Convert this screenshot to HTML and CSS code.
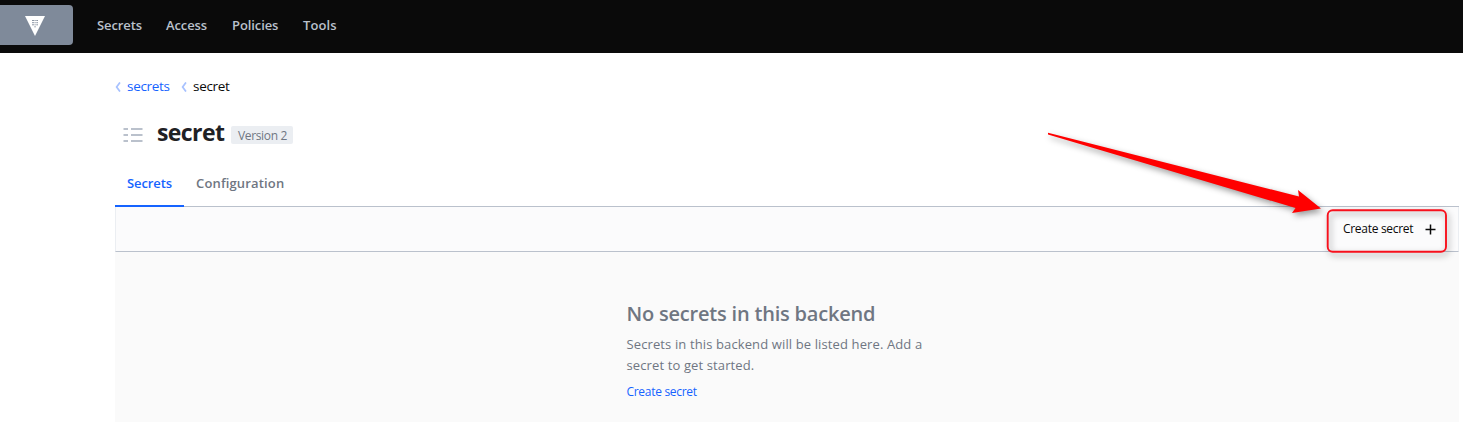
FILE: index.html
```html
<!DOCTYPE html>
<html lang="en">
<head>
<meta charset="utf-8">
<title>Vault</title>
<link rel="stylesheet" href="styles.css">
</head>
<body>
<header class="navbar">
  <a class="brand" aria-label="Vault"><svg width="20" height="20" viewBox="0 0 20 20"><path d="M0 0h20L10 20z" fill="#fff"/><path d="M7 4.5h2m.5 0h1.2m.6 0H13M7 6.7h2m.5 0h1.2m.6 0H13M7 8.8h2m.5 0h1.2m.6 0H13M9.3 10.8h1.5" stroke="#7f8a9a" stroke-width=".9" fill="none"/></svg></a>
  <nav class="nav">
    <a class="nav-secrets">Secrets</a><a class="nav-access">Access</a><a class="nav-policies">Policies</a><a class="nav-tools">Tools</a>
  </nav>
</header>
<main class="page">
  <nav class="breadcrumb">
    <svg class="chev" width="6" height="10" viewBox="0 0 6 10"><path d="M5 .4 1.6 5 5 9.6"/></svg><a class="crumb link">secrets</a>
    <svg class="chev" width="6" height="10" viewBox="0 0 6 10"><path d="M5 .4 1.6 5 5 9.6"/></svg><span class="crumb">secret</span>
  </nav>
  <div class="title-row">
    <svg class="list-icon" width="20" height="14" viewBox="0 0 20 14"><path d="M.5 1H5M8 1H19.500M.5 7H5M8 7H19.500M.5 13H5M8 13H19.500" stroke="#bac1cc" stroke-width="2"/></svg>
    <h1 class="title">secret</h1>
    <span class="badge"><span class="badge-text">Version 2</span></span>
  </div>
  <div class="tabs"><a class="tab active">Secrets</a><a class="tab config">Configuration</a></div>
  <div class="toolbar">
    <a class="create">Create secret</a>
    <svg class="plus" width="11" height="11" viewBox="0 0 11 11"><path d="M5.5.5v10M.5 5.5h10" stroke="#0a0a0a" stroke-width="1.5"/></svg>
  </div>
  <section class="empty">
    <div class="empty-body">
      <h2 class="empty-title">No secrets in this backend</h2>
      <p class="empty-text"><span>Secrets in this backend will be listed here. Add a</span><br><span>secret to get started.</span></p>
      <a class="empty-link">Create secret</a>
    </div>
  </section>
</main>
<svg class="annotation" width="1463" height="422" viewBox="0 0 1463 422">
  <path d="M1048 132.800 1299 196.500 1298 190 1321 208.500 1292 213 1295.500 208 1048 134.500z" fill="#f00"/>
  <rect x="1327.700" y="210.200" width="118.300" height="41.600" rx="5" fill="none" stroke="#f8101c" stroke-width="1.900"/>
</svg>
</body>
</html>
```

FILE: styles.css
```css
* { box-sizing: border-box; }
body { margin: 0; height: 422px; overflow: hidden; background: #fff; color: #0a0a0a; font-family: "Open Sans", "Noto Sans", sans-serif; font-size: 14px; }
h1, h2, p { margin: 0; }
a, .crumb, .title, .badge-text { white-space: nowrap; }
.navbar { height: 53px; background: #0a0a0a; display: flex; align-items: flex-start; padding-top: 5px; }
.brand { width: 73px; height: 40px; background: #7f8a9a; border-radius: 0 4px 4px 0; display: flex; align-items: center; padding: 2px 0 0 25px; }
.nav { display: flex; height: 40px; line-height: 40px; margin-left: 24px; gap: 24px; color: #bac1cc; font-size: 13px; font-weight: 600; }
.nav-secrets { width: 45px; letter-spacing: -.1px; }
.nav-access { width: 42px; letter-spacing: -.1px; }
.nav-policies { width: 47px; letter-spacing: -.1px; }
.nav-tools { width: 34px; letter-spacing: .1px; }
.page { width: 1344px; margin-left: 115px; }
.breadcrumb { height: 67px; display: flex; align-items: center; line-height: 20px; font-size: 13.500px; }
.chev { fill: none; stroke: #a8c2ff; stroke-width: 1.700; margin-right: 6px; flex: none; }
.crumb { width: 54px; padding-bottom: 2px; letter-spacing: -.3px; }
.link { color: #1563ff; }
.title-row { height: 44px; display: flex; align-items: center; padding-left: 8px; margin-top: -7px; }
.list-icon { margin: 0 14px 0 0; }
.title { width: 74px; font-size: 23px; line-height: 36px; padding-bottom: 6px; font-weight: 700; color: #1f2124; letter-spacing: -.6px; }
.badge { width: 62px; height: 18px; background: #ebeef2; border-radius: 2px; color: #6f7682; font-size: 12px; line-height: 20px; padding-left: 7px; letter-spacing: -.35px; }
.tabs { height: 50px; display: flex; border-bottom: 1px solid #bac1cc; line-height: 52px; font-size: 13px; font-weight: 600; color: #6f7682; }
.tab { padding: 0 12px; height: 50px; }
.tab.active { width: 69px; color: #1563ff; border-bottom: 2px solid #1563ff; letter-spacing: -.1px; }
.config { letter-spacing: .15px; }
.toolbar { height: 45px; display: flex; align-items: center; justify-content: flex-end; padding-right: 22px; background: #fbfbfc; border: 1px solid #ebeef2; border-top: 0; border-bottom-color: #bac1cc; font-size: 12px; font-weight: 500; }
.create { width: 71px; margin: 0 11px 2px 0; letter-spacing: -.3px; }
.empty { height: 170px; background: #fafafa; padding: 47px 0 0 511.500px; color: #6f7682; }
.empty-body { width: 320px; }
.empty-title { font-size: 20px; line-height: 30px; font-weight: 600; white-space: nowrap; letter-spacing: -.2px; }
.empty-text { font-size: 13px; line-height: 21px; margin-top: 5px; white-space: nowrap; letter-spacing: .12px; }
.empty-link { display: block; color: #1563ff; font-size: 12px; line-height: 18px; font-weight: 500; margin-top: 7px; letter-spacing: -.3px; }
.annotation { position: absolute; left: 0; top: 0; pointer-events: none; filter: drop-shadow(2px 3px 3px rgba(0,0,0,.4)); }
```
